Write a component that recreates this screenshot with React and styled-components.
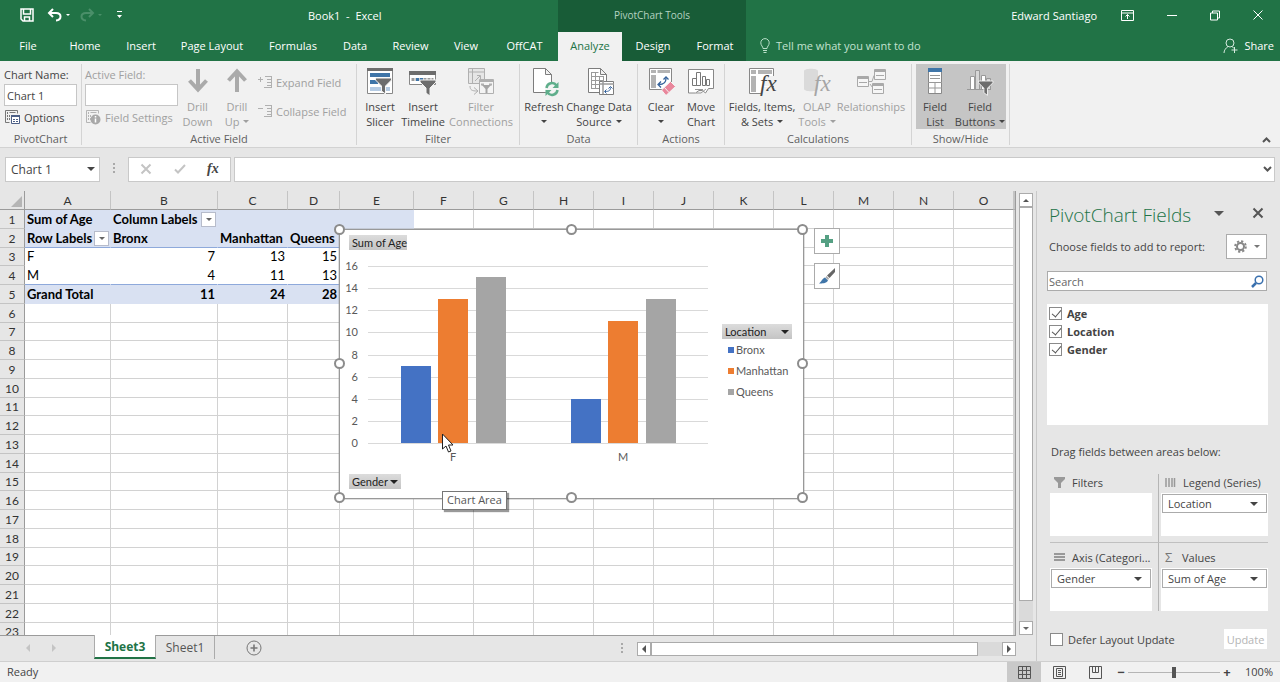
import React from "react";
import styled, { createGlobalStyle, css } from "styled-components";

const UI = `"Open Sans", "Noto Sans", sans-serif`;
const CELL = `Lato, "Open Sans", sans-serif`;

const Global = createGlobalStyle`
  * { box-sizing: border-box; }
  html, body { margin: 0; height: 100%; }
  body { font: 11px/15px ${UI}; color: #444; background: #e6e6e6; }
  button, input { font: inherit; color: inherit; margin: 0; }
  button { border: 0; background: none; padding: 0; }
  svg { display: block; flex: none; overflow: visible; }
`;

const Window = styled.div`
  display: flex;
  flex-direction: column;
  height: 100vh;
  overflow: hidden;
`;

/* ---------- title bar and tabs ---------- */
const Header = styled.header`
  display: grid;
  grid-template-columns: 558px 188px 1fr;
  grid-template-rows: 30px 31px;
  flex: none;
  background: #217346;
  color: #fff;
`;
const TitleLeft = styled.div`
  display: grid;
  grid-template-columns: 130px 1fr;
  align-items: center;
`;
const QuickAccess = styled.div`
  display: flex;
  align-items: center;
  padding-left: 20px;
`;
const QuickButton = styled.button`
  display: flex;
  align-items: center;
  gap: 4px;
  margin-right: ${(p) => p.$after || 0}px;
  color: ${(p) => (p.disabled ? "#4a8f69" : "#fff")};
`;
const BookTitle = styled.h1`
  margin: 0;
  padding-left: 178px;
  font: inherit;
  white-space: pre;
`;
const ContextTitle = styled.div`
  display: flex;
  align-items: center;
  justify-content: center;
  font-size: 10px;
  background: #185c37;
  color: #b4d3c1;
`;
const TitleRight = styled.div`
  display: flex;
  align-items: center;
  justify-content: flex-end;
  padding-right: 17px;
`;
const UserName = styled.span`
  margin-right: 24px;
`;
const WindowButtons = styled.div`
  display: flex;
  gap: 33px;
`;
const TabList = styled.nav`
  display: flex;
  background: ${(p) => (p.$context ? "#185c37" : "transparent")};
`;
const Tab = styled.button`
  width: ${(p) => p.$w}px;
  color: ${(p) => (p.$on ? "#217346" : "#fff")};
  background: ${(p) => (p.$on ? "#f1f1f1" : "transparent")};
  margin-top: ${(p) => (p.$on ? 2 : 0)}px;
  padding-bottom: ${(p) => (p.$on ? 2 : 0)}px;
  white-space: nowrap;
`;
const TabsRight = styled.div`
  display: flex;
  align-items: center;
  justify-content: space-between;
  padding: 0 6px 0 14px;
`;
const IconLabel = styled.button`
  display: flex;
  align-items: center;
  gap: 6px;
  color: ${(p) => p.$color || "inherit"};
  white-space: nowrap;
`;

/* ---------- ribbon ---------- */
const Ribbon = styled.section`
  display: flex;
  flex: none;
  padding: 3px 0 2px;
  background: #f1f1f1;
  border-bottom: 1px solid #d2d2d2;
`;
const Group = styled.div`
  width: ${(p) => p.$w}px;
  flex: none;
  border-right: 1px solid #d4d4d4;
`;
const GroupBody = styled.div`
  display: flex;
  height: 65px;
  margin-bottom: 4px;
  padding-left: ${(p) => p.$pad}px;
`;
const GroupName = styled.div`
  text-align: center;
  line-height: 12px;
  color: #5f5f5f;
`;
const Big = styled.button`
  width: ${(p) => p.$w}px;
  flex: none;
  display: flex;
  flex-direction: column;
  align-items: center;
  padding-top: 3px;
  line-height: 15px;
  white-space: nowrap;
  background: ${(p) => (p.$on ? "#c5c5c5" : "transparent")};
  color: ${(p) => (p.disabled ? "#a0a0a0" : "#444")};
`;
const BigIcon = styled.span`
  height: 32px;
`;
const Line = styled.span`
  display: flex;
  align-items: center;
  gap: 4px;
  height: 15px;
`;
const Caret = styled.span`
  display: block;
  border: ${(p) => p.$s || 3}px solid transparent;
  border-top-color: currentColor;
  border-bottom: 0;
`;
const Stack = styled.div`
  display: flex;
  flex-direction: column;
  width: ${(p) => p.$w}px;
  padding-top: ${(p) => p.$top || 3}px;
  gap: ${(p) => p.$gap || 0}px;
`;
const FieldLabel = styled.label`
  height: 17px;
  line-height: 16px;
  white-space: nowrap;
  color: ${(p) => (p.$off ? "#a0a0a0" : "#444")};
`;
const RibbonInput = styled.input`
  width: ${(p) => p.$w}px;
  height: 22px;
  padding: 0 2px;
  border: 1px solid #c6c6c6;
  background: #fff;
`;
const SmallButton = styled.button`
  display: flex;
  align-items: center;
  gap: 4px;
  height: 22px;
  white-space: nowrap;
  color: ${(p) => (p.disabled ? "#a0a0a0" : "#444")};
`;
const Collapse = styled.button`
  align-self: flex-end;
  margin-left: auto;
  padding: 0 9px 2px 0;
`;

/* ---------- formula bar ---------- */
const FormulaRow = styled.div`
  display: flex;
  flex: none;
  align-items: center;
  height: 43px;
  padding: 0 5px 1px;
`;
const Boxed = styled.div`
  display: flex;
  align-items: center;
  height: 25px;
  background: #fff;
  border: 1px solid #c9c9c9;
  width: ${(p) => (p.$w ? p.$w + "px" : "auto")};
  flex: ${(p) => (p.$w ? "none" : "1")};
  padding-right: ${(p) => p.$pad || 0}px;
  margin-right: ${(p) => p.$after || 0}px;
`;
const EditButton = styled.button`
  display: flex;
  flex: 1;
  align-items: center;
  justify-content: center;
`;
const PlainInput = styled.input`
  flex: 1;
  min-width: 0;
  width: 100%;
  height: 100%;
  border: 0;
  padding: 0 ${(p) => (p.$tight ? 1 : 5)}px;
  font-size: ${(p) => (p.$tight ? 11 : 12)}px;
  background: transparent;
  outline: 0;
  &::placeholder { color: #666; opacity: 1; }
`;
const Dots = styled.span`
  flex: none;
  width: 2px;
  height: 12px;
  margin: 0 ${(p) => p.$after}px 0 ${(p) => p.$before || 0}px;
  background: repeating-linear-gradient(#a9a9a9 0 2px, transparent 2px 4px);
`;

/* ---------- sheet ---------- */
const Main = styled.main`
  display: flex;
  flex: 1;
  min-height: 0;
`;
const SheetSide = styled.div`
  flex: 1;
  min-width: 0;
  display: flex;
  flex-direction: column;
`;
const SheetRow = styled.div`
  flex: 1;
  min-height: 0;
  display: flex;
`;
const GridArea = styled.div`
  position: relative;
  flex: 1;
  min-width: 0;
  overflow: hidden;
  border-right: 1px solid #9b9b9b;
  border-bottom: 1px solid #9b9b9b;
`;
const Sheet = styled.table`
  width: 100%;
  table-layout: fixed;
  border-collapse: separate;
  border-spacing: 0;
  background: #fff;
  color: #000;
  font: 13px/17px ${CELL};
`;
const ColHead = styled.th`
  height: 19px;
  padding: 0;
  font-size: 12px;
  font-weight: 400;
  color: #333;
  background: #e6e6e6;
  border-right: 1px solid ${(p) => (p.$corner ? "#9b9b9b" : "#c4c4c4")};
  border-bottom: 1px solid #9b9b9b;
`;
const Corner = styled.span`
  display: block;
  width: 0;
  height: 0;
  margin: 3px 2px 0 auto;
  border-left: 11px solid transparent;
  border-bottom: 11px solid #b5b5b5;
`;
const RowHead = styled.th`
  padding: 0;
  font-size: 12px;
  font-weight: 400;
  color: #333;
  background: #e6e6e6;
  border-right: 1px solid #9b9b9b;
  border-bottom: 1px solid #c4c4c4;
`;
const Row = styled.tr`
  height: ${(p) => p.$h}px;
`;
const Cell = styled.td`
  padding: 0 2px;
  overflow: hidden;
  white-space: nowrap;
  border-right: 1px solid #d2d2d2;
  border-bottom: 1px solid #d2d2d2;
  text-align: ${(p) => (p.$num ? "right" : "left")};
  font-weight: ${(p) => (p.$bold ? 700 : 400)};
  ${(p) => p.$fill && css`background: #d9e1f2; border-color: #d9e1f2;`}
  ${(p) => p.$plain && css`border-color: #fff;`}
  ${(p) => p.$rule && css`border-bottom-color: #8ea9db;`}
`;
const CellFlex = styled.span`
  display: flex;
  justify-content: space-between;
  align-items: center;
  height: 17px;
`;
const FilterButton = styled.button`
  display: flex;
  align-items: center;
  justify-content: center;
  flex: none;
  width: 15px;
  height: 15px;
  margin-right: -1px;
  background: #fff;
  border: 1px solid #b7bccb;
  color: #666;
`;

/* ---------- chart ---------- */
const Chart = styled.section`
  position: absolute;
  left: 339px;
  top: 38px;
  width: 465px;
  height: 270px;
  display: flex;
  flex-direction: column;
  gap: 2px;
  padding: 5px 0 0 1px;
  background: #fff;
  border: 1px solid #999;
  box-shadow: 0 0 0 1px rgba(150, 150, 150, 0.3);
  color: #595959;
  font: 11px/15px ${CELL};
`;
const ChartBody = styled.div`
  display: flex;
`;
const PivotButton = styled.button`
  display: flex;
  align-items: center;
  justify-content: space-between;
  width: ${(p) => p.$w}px;
  height: 15px;
  padding: 0 3px;
  margin-left: ${(p) => p.$left || 0}px;
  background: linear-gradient(#dcdcdc, #c4c4c4);
  color: #222;
  white-space: nowrap;
`;
const Legend = styled.div`
  padding-top: 72px;
  margin-left: 13px;
`;
const LegendList = styled.ul`
  list-style: none;
  margin: 0;
  padding: 0 0 0 6px;
`;
const LegendItem = styled.li`
  display: flex;
  align-items: center;
  gap: 2px;
  height: 21px;
  &::before {
    content: "";
    width: 6px;
    height: 6px;
    background: ${(p) => p.$c};
  }
`;
const Handle = styled.span`
  position: absolute;
  left: ${(p) => p.$x};
  top: ${(p) => p.$y};
  width: 11px;
  height: 11px;
  margin: -6px 0 0 -6px;
  border: 2px solid #8c8c8c;
  border-radius: 50%;
  background: #fff;
`;
const ChartTools = styled.div`
  position: absolute;
  left: 814px;
  top: 37px;
  display: flex;
  flex-direction: column;
  gap: 9px;
`;
const ToolButton = styled.button`
  display: flex;
  align-items: center;
  justify-content: center;
  width: 26px;
  height: 26px;
  background: #fff;
  border: 1px solid #ababab;
`;
const Tooltip = styled.div`
  position: absolute;
  left: 442px;
  top: 300px;
  height: 19px;
  width: 65px;
  line-height: 16px;
  text-align: center;
  background: #fff;
  border: 1px solid #767676;
  box-shadow: 2px 2px 1px rgba(0, 0, 0, 0.4);
  color: #575757;
`;
const Pointer = styled.svg`
  position: absolute;
  left: 441px;
  top: 242px;
`;

/* ---------- scroll bars and sheet tabs ---------- */
const VScroll = styled.div`
  width: 20px;
  flex: none;
  display: flex;
  flex-direction: column;
  align-items: center;
  padding: 2px 0 1px;
`;
const ScrollButton = styled.button`
  display: flex;
  align-items: center;
  justify-content: center;
  width: 14px;
  height: 14px;
  flex: none;
  background: #fff;
  border: 1px solid #ababab;
  color: #666;
`;
const Thumb = styled.div`
  flex: ${(p) => p.$grow};
  background: #fff;
  border: 1px solid #ababab;
  ${(p) => (p.$h ? css`height: 14px;` : css`width: 14px;`)}
`;
const Track = styled.div`
  flex: ${(p) => p.$grow};
  background: #dadada;
  ${(p) => (p.$h ? css`height: 14px;` : css`width: 14px;`)}
`;
const BottomBar = styled.div`
  display: flex;
  flex: none;
  height: 25px;
`;
const SheetNav = styled.div`
  display: flex;
  align-items: center;
  justify-content: space-between;
  width: 94px;
  padding: 0 38px 2px 26px;
`;
const SheetTab = styled.button`
  position: relative;
  height: ${(p) => (p.$on ? 24 : 23)}px;
  margin-top: ${(p) => (p.$on ? -1 : 0)}px;
  width: ${(p) => (p.$on ? 62 : 59)}px;
  font-size: 12px;
  color: ${(p) => (p.$on ? "#217346" : "#555")};
  font-weight: ${(p) => (p.$on ? 700 : 400)};
  background: ${(p) => (p.$on ? "#fff" : "transparent")};
  border-bottom: ${(p) => (p.$on ? "2px solid #217346" : "0")};
  border-left: ${(p) => (p.$on ? "1px solid #ababab" : "0")};
  border-right: 1px solid #ababab;
`;
const AddSheet = styled.button`
  margin: 0 0 0 31px;
  padding-bottom: 1px;
`;
const HScroll = styled.div`
  display: flex;
  align-items: center;
  width: 415px;
  margin-left: auto;
  padding-right: 20px;
`;

/* ---------- field pane ---------- */
const Pane = styled.aside`
  width: 244px;
  flex: none;
  display: flex;
  flex-direction: column;
  border-left: 1px solid #c9c9c9;
  padding: 10px 12px 0 10px;
`;
const PaneHead = styled.div`
  display: flex;
  align-items: center;
  height: 28px;
  padding: 0 5px 0 2px;
  color: #555;
`;
const PaneTitle = styled.h2`
  margin: 0;
  flex: 1;
  font: 300 19px/28px ${UI};
  color: #217346;
  white-space: nowrap;
`;
const PaneHeadButton = styled.button`
  margin-left: ${(p) => p.$left || 0}px;
  padding-bottom: 4px;
`;
const PaneRow = styled.div`
  display: flex;
  align-items: center;
  justify-content: space-between;
  height: ${(p) => p.$h}px;
  margin-bottom: ${(p) => p.$after || 0}px;
  padding: 0 1px 0 ${(p) => p.$left || 0}px;
`;
const GearButton = styled.button`
  display: flex;
  align-items: center;
  justify-content: space-around;
  width: 41px;
  height: 25px;
  padding: 0 3px;
  background: #fff;
  border: 1px solid #ababab;
  color: #777;
`;
const Search = styled.div`
  display: flex;
  align-items: center;
  height: 20px;
  margin-right: 1px;
  padding-right: 2px;
  background: #fff;
  border: 1px solid #ababab;
`;
const FieldList = styled.div`
  height: 121px;
  margin: 13px 0 18px;
  padding-left: 2px;
  background: #fff;
`;
const Check = styled.label`
  display: flex;
  align-items: center;
  gap: 5px;
  height: 18px;
  font-weight: ${(p) => (p.$bold ? 700 : 400)};
`;
const CheckBox = styled.input`
  appearance: none;
  position: relative;
  width: 13px;
  height: 13px;
  border: 1px solid #8a8a8a;
  background: #fff;
  &:checked::after {
    content: "";
    position: absolute;
    left: 4px;
    top: 0;
    width: 4px;
    height: 8px;
    border: solid #555;
    border-width: 0 1px 1px 0;
    transform: rotate(40deg);
  }
`;
const Areas = styled.div`
  display: grid;
  grid-template-columns: 109px 1fr;
  margin: 15px 0 0 3px;
`;
const Area = styled.div`
  height: ${(p) => (p.$top ? 69 : 68)}px;
  padding-${(p) => (p.$right ? "left" : "right")}: ${(p) => (p.$right ? 2 : 6)}px;
  ${(p) => !p.$right && css`border-right: 1px solid #b5b5b5;`}
  ${(p) => p.$top && css`border-bottom: 1px solid #c0c0c0;`}
`;
const AreaName = styled.div`
  display: flex;
  align-items: center;
  gap: 7px;
  height: ${(p) => (p.$top ? 19 : 25)}px;
  padding: ${(p) => (p.$top ? 0 : 5)}px 0 2px 4px;
  white-space: nowrap;
`;
const Sigma = styled.span`
  width: 10px;
  font-size: 13px;
  color: #777;
`;
const AreaBox = styled.div`
  height: 43px;
  padding: 1px;
  background: #fff;
`;
const AreaField = styled.button`
  display: flex;
  align-items: center;
  justify-content: space-between;
  width: 100%;
  height: 19px;
  padding: 0 8px 0 5px;
  border: 1px solid #ababab;
`;
const DeferRow = styled.div`
  display: flex;
  align-items: center;
  justify-content: space-between;
  margin-top: 18px;
  padding: 0 1px 0 3px;
`;
const UpdateButton = styled.button`
  width: 43px;
  height: 20px;
  background: #fff;
  color: #b5b5b5;
`;

/* ---------- status bar ---------- */
const Status = styled.footer`
  display: flex;
  align-items: center;
  flex: none;
  height: 21px;
  padding: 0 7px;
  background: #f1f1f1;
  border-top: 1px solid #cfcfcf;
`;
const StatusText = styled.span`
  flex: 1;
  padding-bottom: 2px;
`;
const Views = styled.div`
  display: flex;
  margin-right: 1px;
`;
const View = styled.button`
  display: flex;
  align-items: center;
  justify-content: center;
  width: ${(p) => (p.$on ? 34 : 36)}px;
  height: 20px;
  background: ${(p) => (p.$on ? "#c9c9c9" : "transparent")};
`;
const ZoomSign = styled.button`
  width: 14px;
  font-weight: 700;
  font-size: 13px;
`;
const ZoomRange = styled.input`
  appearance: none;
  width: 92px;
  height: 11px;
  margin: 0;
  background: linear-gradient(#b5b5b5, #b5b5b5) center / 100% 1px no-repeat;
  &::-webkit-slider-thumb {
    appearance: none;
    width: 4px;
    height: 11px;
    background: #555;
  }
`;
const ZoomValue = styled.span`
  width: 39px;
  padding-bottom: 2px;
  text-align: right;
`;

/* ---------- icons ---------- */
const Svg = ({ w = 28, h = 28, x = 0, children, ...rest }) => (
  <svg width={w} height={h} viewBox={`${x} 0 ${w} ${h}`} fill="none" stroke="#666" aria-hidden="true" {...rest}>
    {children}
  </svg>
);
const SaveIcon = () => (
  <Svg w={14} h={14} stroke="#fff" strokeWidth="1.5">
    <path d="M1 1h12v12H3l-2-2zM3.500 1v5h7V1M4.500 13V9h5v4" />
  </Svg>
);
const UndoIcon = ({ flip }) => (
  <Svg w={14} h={14} stroke="currentColor" strokeWidth="2">
    <path d={flip ? "M9 1l4 4-4 4M12 5H6C0 5 0 12 6 12.500" : "M5 1L1 5l4 4M2 5h6c6 0 6 7 0 7.500"} />
  </Svg>
);
const CustomizeIcon = () => (
  <Svg w={7} h={8} stroke="none" fill="#fff">
    <path d="M1 0h5v1H1zM1 4h5L3.500 7z" />
  </Svg>
);
const DisplayIcon = () => (
  <Svg w={13} h={11} stroke="#fff">
    <path d="M.5.5h12v10H.5zM.5 3h12M6.500 9V4.500M4.500 6.500l2-2 2 2" />
  </Svg>
);
const MinIcon = () => <Svg w={10} h={11} stroke="#fff"><path d="M0 5.500h10" /></Svg>;
const RestoreIcon = () => (
  <Svg w={10} h={11} stroke="#fff"><path d="M.5 3h7v7h-7zM2.500 3V1h7v7h-2" /></Svg>
);
const CloseIcon = ({ c = "#fff", w = 1 }) => (
  <Svg w={10} h={10} stroke={c} strokeWidth={w}><path d="M.5.5l9 9M9.500.5l-9 9" /></Svg>
);
const BulbIcon = () => (
  <Svg w={10} h={15} stroke="#b9e0c9">
    <path d="M3 10.500C3 8.500.8 7.500.8 4.800a4.200 4.200 0 018.400 0C9.200 7.500 7 8.500 7 10.500zM3 12.500h4M3.500 14.500h3" />
  </Svg>
);
const ShareIcon = () => (
  <Svg w={15} h={16} stroke="#d6eadf">
    <circle cx="7" cy="5" r="4" />
    <path d="M1 15c0-3 2-5 4-6.500M9 8.500l2 2M11.500 9v6M8.500 12h6" />
  </Svg>
);
const OptionsIcon = ({ off }) => (
  <Svg w={16} h={16} stroke={off ? "#b5b5b5" : "#777"}>
    <path d="M1.500 13.500v-12h12v3M1.500 13.500h4M5.500 3.500h6" />
    <path d="M3.500 3v9M5.500 6v6" strokeDasharray="2 1" />
    {off ? (
      <>
        <circle cx="10.500" cy="10.500" r="5" fill="#a8a8a8" stroke="none" />
        <path d="M10.500 7v1.500M10.500 9.500v4" stroke="#fff" strokeWidth="1.500" />
      </>
    ) : (
      <>
        <path d="M7.500 6.500h8v8h-8z" fill="#fff" stroke="#4c5f86" />
        <path d="M7 7h9" stroke="#4c5f86" strokeWidth="2" />
        <path d="M9 10.500h2M12 10.500h2M9 12.500h2M12 12.500h2" stroke="#4c5f86" />
      </>
    )}
  </Svg>
);
const DrillIcon = ({ up }) => (
  <Svg w={22} h={28} stroke="#aaa" strokeWidth="4">
    <path d={up ? "M11 25V5M2.500 13.500L11 4.500l8.500 9" : "M11 2v20M2.500 13.500l8.500 9 8.500-9"} />
  </Svg>
);
const OutlineIcon = ({ minus }) => (
  <Svg w={14} h={14} stroke="#b0b0b0">
    <path d={minus ? "M0 4.500h5" : "M0 4.500h5M2.500 2v5"} />
    <path d="M7 1.500h6M9 4.500h4M9 7.500h4M6 12.500h7M9 10.500h4M13.500 1v12" />
  </Svg>
);
const Funnel = ({ x, y, s = 1, c = "#6d6d6d" }) => (
  <path transform={`translate(${x} ${y}) scale(${s})`} d="M0 0h16v2L10 8v8l-4-3V8L0 2z" fill={c} stroke="#f4f4f4" />
);
const SlicerIcon = () => (
  <Svg>
    <path d="M1.500 2v24.500h25V2" fill="#fff" stroke="#888" />
    <path d="M1 1h26v3H1z" fill="#6d6d6d" stroke="none" />
    <path d="M4 6h20v4H4zM4 13h8v4H4z" fill="#3f75a8" stroke="none" />
    <path d="M4 20h20v4H4z" fill="#b5cbe3" stroke="none" />
    <Funnel x={9.500} y={11} />
  </Svg>
);
const TimelineIcon = () => (
  <Svg>
    <path d="M.5 6v11.500h26V6" fill="#fff" stroke="#888" />
    <path d="M0 4h27v4H0z" fill="#6d6d6d" stroke="none" />
    <path d="M2.500 12.500h22" stroke="#9a9a9a" strokeWidth="3" strokeDasharray="3 1" />
    <path d="M7 12.500h8" stroke="#3f75a8" strokeWidth="3" strokeDasharray="3 1" />
    <Funnel x={11} y={13} />
  </Svg>
);
const FilterLinkIcon = () => (
  <Svg stroke="#b0b0b0">
    <path d="M1.500 1.500h16v15h-16zM1.500 5h16M5.500 1.500v15M8 14l5-5M10 8.500h3.500V12" fill="#e6e6e6" />
    <path d="M3 19c0 4 2 5 7 5M7 20.500l4 3.500-4 3.500" />
    <path d="M12.500 12.500h14v14h-14z" fill="#f4f4f4" />
    <path d="M12 14h15M14 17.500h3M22 17.500h3" strokeWidth="2" />
    <path d="M15 18h9l-3.500 4v4h-2v-4z" fill="#a5a5a5" stroke="none" />
  </Svg>
);
const RefreshIcon = () => (
  <Svg w={32} x={-4}>
    <path d="M1.500 1.500h12l6 6v18h-18zM13.500 1.500v6h6" fill="#fff" stroke="#7d7d7d" />
    <circle cx="20" cy="22" r="7" fill="#f4f4f4" stroke="none" />
    <path d="M14.500 21a5.500 5.500 0 0110-2.500M25.500 23a5.500 5.500 0 01-10 2.500" stroke="#5fae8b" strokeWidth="2.500" />
    <path d="M26.500 15v6h-6zM13.500 29v-6h6z" fill="#5fae8b" stroke="none" />
  </Svg>
);
const SourceIcon = () => (
  <Svg w={32} x={-4}>
    <path d="M1.500 1.500h12l6 6v18h-18zM13.500 1.500v6h6" fill="#fff" stroke="#7d7d7d" />
    <path d="M4.500 5.500h7M4.500 9.500h12M4.500 13.500h12M4.500 17.500h12M4.500 21.500h12M4.500 5v17M8.500 5v17M12.500 9v13M16.500 9v13" stroke="#9a9a9a" />
    <path d="M12.500 14.500h14v13h-14z" fill="#fff" stroke="#7d7d7d" />
    <path d="M12 17h15M16 14v13" stroke="#9a9a9a" strokeWidth="1.500" />
    <path d="M18 24.500c4 0 5.500-1 5.500-4M21.500 21.500l2-2 2 2M19.500 22.500l-2 2 2 2" stroke="#35629b" />
  </Svg>
);
const ClearIcon = () => (
  <Svg w={32} x={-4}>
    <path d="M.5 1.500h22v21h-22z" fill="#fff" stroke="#888" />
    <path d="M2 3h5v3H2zM8.500 3H21v3H8.500zM2 8h5v13H2z" fill="#b3b3b3" stroke="none" />
    <path d="M10 17.500c5 0 7-2 7-6M14.500 12.500l2.500-2.500 2.500 2.500M12 14.500l-3 3 3 3" stroke="#35629b" strokeWidth="1.300" />
    <path d="M12.500 23l9-8.500 5 5L17.500 28h-1z" fill="#e9879c" stroke="#f4f4f4" />
    <path d="M15.500 20.500l4.500 5" stroke="#f4f4f4" />
  </Svg>
);
const MoveIcon = () => (
  <Svg>
    <path d="M1.500 2.500h25v19h-5l-3 4.500-3-2.500H12l-3.500 2.500H1.500z" fill="#fff" stroke="#888" />
    <path d="M5.500 11.500h4v7h-4zM9.500 5.500h4v13h-4zM15.500 9.500h3v9h-3zM19.500 12.500h3v6h-3z" stroke="#777" />
    <path d="M8 22.500h8M9 26h5l5-4" stroke="#999" />
  </Svg>
);
const FxGlyph = ({ x, y, size, color = "#444", bold }) => (
  <text x={x} y={y} fill={color} stroke="none" fontFamily="Liberation Serif, serif" fontStyle="italic" fontWeight={bold ? 700 : 400} fontSize={size}>fx</text>
);
const FieldsIcon = () => (
  <Svg w={32}>
    <path d="M3.500 1.500h24v25h-24z" fill="#fff" stroke="#888" />
    <path d="M5 3h5v4H5zM12 3h14v4H12zM5 9h5v16H5z" fill="#b3b3b3" stroke="none" />
    <path d="M18 9h11v10H18zM15 20h13v7H15z" fill="#f1f1f1" stroke="none" />
    <FxGlyph x={14} y={24} size={23} />
  </Svg>
);
const OlapIcon = () => (
  <Svg>
    <path d="M1 4c0-3 14-3 14 0v18c0 3-14 3-14 0z" fill="#dadada" stroke="none" />
    <FxGlyph x={11} y={24} size={23} color="#a5a5a5" />
  </Svg>
);
const RelationIcon = () => (
  <Svg w={30} stroke="#a9a9a9">
    <path d="M1.500 9.500h11v10h-11zM18.500 2.500h11v10h-11zM16.500 16.500h11v10h-11zM13 14.500h3M16 14.500l2-6M14 17l2.500 3.500" fill="#f6f6f6" />
    <path d="M1 11h12M18 4h12M16 18h12" strokeWidth="2" />
    <path d="M3 15.500h8M20 8.500h8M18 22.500h8" />
  </Svg>
);
const ListIcon = () => (
  <Svg w={16}>
    <path d="M1.500 2.500h13v24h-13z" fill="#fff" stroke="#888" />
    <path d="M1 1h14v4H1z" fill="#3f75a8" stroke="none" />
    <path d="M3 8.500h10M3 11.500h10" stroke="#999" />
    <path d="M1 15.500h14M1 21h14M8 15v11" stroke="#999" />
  </Svg>
);
const ButtonsIcon = () => (
  <Svg>
    <path d="M4.500 9.500h4v13h-4zM15.500 8.500h4v14h-4z" fill="#fff" stroke="#999" />
    <path d="M9.500 3.500h4v19h-4zM20.500 11.500h4v11h-4z" fill="#d6d6d6" stroke="#999" />
    <path d="M1 22.500h24" stroke="#999" />
    <Funnel x={12.500} y={14} s={0.9} />
  </Svg>
);
const Chevron = ({ up }) => (
  <Svg w={9} h={6} stroke="#555" strokeWidth="2"><path d={up ? "M1 5l3.500-3.500L8 5" : "M1 1l3.500 3.500L8 1"} /></Svg>
);
const CheckIcon = () => (
  <Svg w={12} h={10} stroke="#c4c4c4" strokeWidth="2"><path d="M1 5.500L4 8.500 11 1" /></Svg>
);
const PlusIcon = () => (
  <Svg w={14} h={14} stroke="#55a083" strokeWidth="4"><path d="M7 1v12M1 7h12" /></Svg>
);
const BrushIcon = () => (
  <Svg w={18} h={18} stroke="none">
    <path d="M17 1v4l-5.500 6-2.500-2.500z" fill="#666" />
    <path d="M8.500 9L11 11.500 10 13 7.500 10.500z" fill="#aaa" />
    <path d="M7 10.500L10 13.500C8.500 16.500 4 16.500 1 16.500 3.500 15 4 11.500 7 10.500z" fill="#3f75a8" />
  </Svg>
);
const GearIcon = () => (
  <Svg w={13} h={13} stroke="#888">
    <circle cx="6.500" cy="6.500" r="3.500" strokeWidth="2" />
    <circle cx="6.500" cy="6.500" r="5.300" strokeWidth="2" strokeDasharray="2.200 1.960" />
  </Svg>
);
const SearchIcon = () => (
  <Svg w={13} h={13} stroke="#3a70ae">
    <circle cx="8" cy="5" r="3.800" strokeWidth="1.500" /><path d="M5 8l-4 4" strokeWidth="2.500" />
  </Svg>
);
const SideArrow = ({ right, c = "#555" }) => (
  <Svg w={4} h={8} stroke="none" fill={c}><path d={right ? "M0 0l4 4-4 4z" : "M4 0L0 4l4 4z"} /></Svg>
);
const UpArrow = () => <Svg w={6} h={3} stroke="none" fill="#555"><path d="M3 0l3 3H0z" /></Svg>;
const AddIcon = () => (
  <Svg w={16} h={16} stroke="#777"><circle cx="8" cy="8" r="7" /><path d="M8 4.500v7M4.500 8h7" strokeWidth="1.600" /></Svg>
);
const AreaFilterIcon = () => (
  <Svg w={11} h={11} stroke="none" fill="#999"><path d="M0 0h11v2L7 6v5H4V6L0 2z" /></Svg>
);
const AreaColsIcon = () => (
  <Svg w={11} h={11} stroke="#999"><path d="M1 1v9M4 1v9M7 1v9M9.500 1v9" strokeWidth="1.500" /></Svg>
);
const AreaRowsIcon = () => (
  <Svg w={11} h={11} stroke="#999"><path d="M0 2h11M0 5h11M0 8h11" strokeWidth="2" /></Svg>
);
const NormalIcon = () => (
  <Svg w={13} h={13} stroke="#555"><path d="M.5.5h12v12H.5zM.5 4.500h12M.5 8.500h12M4.500.5v12M8.500.5v12" /></Svg>
);
const PageIcon = () => (
  <Svg w={13} h={13} stroke="#555"><path d="M.5.5h12v12H.5zM3.500 2.500h6v8h-6zM5 4.500h3M5 6.500h3M5 8.500h3" /></Svg>
);
const BreakIcon = () => (
  <Svg w={13} h={13} stroke="#555"><path d="M.5.5h12v12H.5zM3.500.5v6h6v-6M6.500.5v6" /></Svg>
);

/* ---------- data ---------- */
const MAIN_TABS = [["File", 56], ["Home", 58], ["Insert", 54], ["Page Layout", 88], ["Formulas", 74], ["Data", 50], ["Review", 61], ["View", 50], ["OffCAT", 67]];
const COLS = [["A", 86], ["B", 107], ["C", 70], ["D", 52], ["E", 74], ...[..."FGHIJKLMNO"].map((l) => [l, 60])];
const ROW_HEIGHTS = [19, 19, 18, 19];
const SERIES = [
  { name: "Bronx", color: "#4472c4", values: [7, 4] },
  { name: "Manhattan", color: "#ed7d31", values: [13, 11] },
  { name: "Queens", color: "#a5a5a5", values: [15, 13] },
];
const PIVOT = {
  3: ["F", 7, 13, 15],
  4: ["M", 4, 11, 13],
  5: ["Grand Total", 11, 24, 28],
};

function FilterHeading({ text, label }) {
  return (
    <CellFlex>
      {text}
      <FilterButton aria-label={label}><Caret /></FilterButton>
    </CellFlex>
  );
}

function SheetCell({ row, col }) {
  if (row === 1 && col < 5) {
    return (
      <Cell $bold $fill>
        {col === 0 && "Sum of Age"}
        {col === 1 && <FilterHeading text="Column Labels" label="Filter columns" />}
      </Cell>
    );
  }
  if (row === 2 && col < 5) {
    return (
      <Cell $bold $fill $rule>
        {col === 0 ? <FilterHeading text="Row Labels" label="Filter rows" /> : ["", "Bronx", "Manhattan", "Queens", ""][col]}
      </Cell>
    );
  }
  if (PIVOT[row] && col < 4) {
    const total = row === 5;
    return (
      <Cell $bold={total} $fill={total} $plain={!total} $rule={row === 4} $num={col > 0}>
        {PIVOT[row][col]}
      </Cell>
    );
  }
  return <Cell />;
}

function PivotSheet() {
  return (
    <Sheet>
      <colgroup>
        <col width="25" />
        {COLS.map(([l, w]) => <col key={l} width={w} />)}
        <col />
      </colgroup>
      <thead>
        <tr>
          <ColHead $corner><Corner /></ColHead>
          {COLS.map(([l]) => <ColHead key={l} scope="col">{l}</ColHead>)}
          <ColHead />
        </tr>
      </thead>
      <tbody>
        {Array.from({ length: 23 }, (_, i) => (
          <Row key={i} $h={ROW_HEIGHTS[i % 4]}>
            <RowHead scope="row">{i + 1}</RowHead>
            {COLS.map(([l], c) => <SheetCell key={l} row={i + 1} col={c} />)}
            <Cell />
          </Row>
        ))}
      </tbody>
    </Sheet>
  );
}

function Plot() {
  const y = (v) => Math.round(191 - v * 11.0625);
  return (
    <svg width="368" height="220" viewBox="0 0 368 220" role="img" aria-label="Sum of Age by Gender and Location">
      {[0, 2, 4, 6, 8, 10, 12, 14, 16].map((v) => (
        <g key={v}>
          <path d={`M27 ${y(v) + 0.5}H367`} stroke="#d9d9d9" />
          <text x="17" y={y(v) + 4} textAnchor="end" fill="#595959">{v}</text>
        </g>
      ))}
      {["F", "M"].map((g, gi) => (
        <g key={g}>
          {SERIES.map((s, si) => (
            <rect key={s.name} x={[60, 97, 135][si] + gi * 170} y={y(s.values[gi])} width="30" height={191 - y(s.values[gi])} fill={s.color} />
          ))}
          <text x={112 + gi * 170} y="209" textAnchor="middle" fill="#595959">{g}</text>
        </g>
      ))}
    </svg>
  );
}

function PivotChart() {
  return (
    <>
      <Chart aria-label="Chart 1">
        <PivotButton $w={58} $left={8}>Sum of Age</PivotButton>
        <ChartBody>
          <Plot />
          <Legend>
            <PivotButton $w={70}>Location <Caret $s={4} /></PivotButton>
            <LegendList>
              {SERIES.map((s) => <LegendItem key={s.name} $c={s.color}>{s.name}</LegendItem>)}
            </LegendList>
          </Legend>
        </ChartBody>
        <PivotButton $w={52} $left={8}>Gender <Caret $s={4} /></PivotButton>
        {["0%", "50%", "100%"].flatMap((x) => ["0%", "50%", "100%"].map((yy) => (
          x === "50%" && yy === "50%" ? null : <Handle key={x + yy} $x={x} $y={yy} />
        )))}
      </Chart>
      <ChartTools>
        <ToolButton aria-label="Chart elements"><PlusIcon /></ToolButton>
        <ToolButton aria-label="Chart styles"><BrushIcon /></ToolButton>
      </ChartTools>
      <Tooltip role="tooltip">Chart Area</Tooltip>
      <Pointer width="13" height="20" viewBox="0 0 13 20" aria-hidden="true">
        <path d="M1.500 1v15l3.500-3 2.500 6 2.500-1-2.500-6h4.500z" fill="#fff" stroke="#222" />
      </Pointer>
    </>
  );
}

function BigButton({ w, icon, lines, caret, on, disabled }) {
  return (
    <Big $w={w} $on={on} disabled={disabled}>
      <BigIcon>{icon}</BigIcon>
      <Line>{lines[0]}</Line>
      <Line>{lines[1]}{caret && <Caret />}</Line>
    </Big>
  );
}

function RibbonGroup({ w, pad, name, children }) {
  return (
    <Group $w={w}>
      <GroupBody $pad={pad}>{children}</GroupBody>
      <GroupName>{name}</GroupName>
    </Group>
  );
}

function DropArea({ top, right, icon, name, field }) {
  return (
    <Area $top={top} $right={right}>
      <AreaName $top={top}>{icon}{name}</AreaName>
      <AreaBox>{field && <AreaField>{field} <Caret $s={4} /></AreaField>}</AreaBox>
    </Area>
  );
}

export default function App() {
  return (
    <Window>
      <Global />
      <Header>
        <TitleLeft>
          <QuickAccess>
            <QuickButton $after={14} aria-label="Save"><SaveIcon /></QuickButton>
            <QuickButton $after={10} aria-label="Undo"><UndoIcon /><Caret $s={2} /></QuickButton>
            <QuickButton $after={14} disabled aria-label="Redo"><UndoIcon flip /><Caret $s={2} /></QuickButton>
            <QuickButton aria-label="Customize toolbar"><CustomizeIcon /></QuickButton>
          </QuickAccess>
          <BookTitle>Book1  -  Excel</BookTitle>
        </TitleLeft>
        <ContextTitle>PivotChart Tools</ContextTitle>
        <TitleRight>
          <UserName>Edward Santiago</UserName>
          <WindowButtons>
            <button aria-label="Ribbon display"><DisplayIcon /></button>
            <button aria-label="Minimize"><MinIcon /></button>
            <button aria-label="Restore"><RestoreIcon /></button>
            <button aria-label="Close"><CloseIcon /></button>
          </WindowButtons>
        </TitleRight>
        <TabList>
          {MAIN_TABS.map(([t, w]) => <Tab key={t} $w={w}>{t}</Tab>)}
        </TabList>
        <TabList $context>
          <Tab $w={64} $on>Analyze</Tab>
          <Tab $w={62}>Design</Tab>
          <Tab $w={62}>Format</Tab>
        </TabList>
        <TabsRight>
          <IconLabel $color="#c3e2d0"><BulbIcon />Tell me what you want to do</IconLabel>
          <IconLabel><ShareIcon />Share</IconLabel>
        </TabsRight>
      </Header>

      <Ribbon>
        <RibbonGroup w={82} pad={4} name="PivotChart">
          <Stack $w={74}>
            <FieldLabel htmlFor="chart-name">Chart Name:</FieldLabel>
            <RibbonInput id="chart-name" $w={73} defaultValue="Chart 1" />
            <SmallButton><OptionsIcon />Options</SmallButton>
          </Stack>
        </RibbonGroup>
        <RibbonGroup w={275} pad={3} name="Active Field">
          <Stack $w={94}>
            <FieldLabel htmlFor="active-field" $off>Active Field:</FieldLabel>
            <RibbonInput id="active-field" $w={93} disabled />
            <SmallButton disabled><OptionsIcon off />Field Settings</SmallButton>
          </Stack>
          <BigButton w={37} icon={<DrillIcon />} lines={["Drill", "Down"]} disabled />
          <BigButton w={42} icon={<DrillIcon up />} lines={["Drill", "Up"]} caret disabled />
          <Stack $w={88} $top={7} $gap={7}>
            <SmallButton disabled><OutlineIcon />Expand Field</SmallButton>
            <SmallButton disabled><OutlineIcon minus />Collapse Field</SmallButton>
          </Stack>
        </RibbonGroup>
        <RibbonGroup w={163} pad={4} name="Filter">
          <BigButton w={38} icon={<SlicerIcon />} lines={["Insert", "Slicer"]} />
          <BigButton w={48} icon={<TimelineIcon />} lines={["Insert", "Timeline"]} />
          <BigButton w={68} icon={<FilterLinkIcon />} lines={["Filter", "Connections"]} disabled />
        </RibbonGroup>
        <RibbonGroup w={118} pad={3} name="Data">
          <BigButton w={42} icon={<RefreshIcon />} lines={["Refresh", ""]} caret />
          <BigButton w={68} icon={<SourceIcon />} lines={["Change Data", "Source"]} caret />
        </RibbonGroup>
        <RibbonGroup w={87} pad={3} name="Actions">
          <BigButton w={40} icon={<ClearIcon />} lines={["Clear", ""]} caret />
          <BigButton w={40} icon={<MoveIcon />} lines={["Move", "Chart"]} />
        </RibbonGroup>
        <RibbonGroup w={187} pad={3} name="Calculations">
          <BigButton w={68} icon={<FieldsIcon />} lines={["Fields, Items,", "& Sets"]} caret />
          <BigButton w={42} icon={<OlapIcon />} lines={["OLAP", "Tools"]} caret disabled />
          <BigButton w={66} icon={<RelationIcon />} lines={["Relationships", ""]} disabled />
        </RibbonGroup>
        <RibbonGroup w={98} pad={4} name="Show/Hide">
          <BigButton w={38} icon={<ListIcon />} lines={["Field", "List"]} on />
          <BigButton w={52} icon={<ButtonsIcon />} lines={["Field", "Buttons"]} caret on />
        </RibbonGroup>
        <Collapse aria-label="Collapse ribbon"><Chevron up /></Collapse>
      </Ribbon>

      <FormulaRow>
        <Boxed $w={95} $pad={4}>
          <PlainInput aria-label="Name box" defaultValue="Chart 1" />
          <button aria-label="Names"><Caret $s={4} /></button>
        </Boxed>
        <Dots $before={13} $after={13} />
        <Boxed $w={103} $after={3}>
          <EditButton aria-label="Cancel"><CloseIcon c="#c4c4c4" w={2} /></EditButton>
          <EditButton aria-label="Enter"><CheckIcon /></EditButton>
          <EditButton aria-label="Insert function">
            <Svg w={12} h={14}><FxGlyph x={0} y={11} size={14} bold /></Svg>
          </EditButton>
        </Boxed>
        <Boxed $pad={2}>
          <PlainInput aria-label="Formula bar" />
          <button aria-label="Expand formula bar"><Chevron /></button>
        </Boxed>
      </FormulaRow>

      <Main>
        <SheetSide>
          <SheetRow>
            <GridArea>
              <PivotSheet />
              <PivotChart />
            </GridArea>
            <VScroll>
              <ScrollButton aria-label="Scroll up"><UpArrow /></ScrollButton>
              <Thumb $grow={394} />
              <Track $grow={20} />
              <ScrollButton aria-label="Scroll down"><Caret /></ScrollButton>
            </VScroll>
          </SheetRow>
          <BottomBar>
            <SheetNav>
              <SideArrow c="#c4c4c4" />
              <SideArrow right c="#c4c4c4" />
            </SheetNav>
            <SheetTab $on>Sheet3</SheetTab>
            <SheetTab>Sheet1</SheetTab>
            <AddSheet aria-label="New sheet"><AddIcon /></AddSheet>
            <HScroll>
              <Dots $after={14} />
              <ScrollButton aria-label="Scroll left"><SideArrow /></ScrollButton>
              <Thumb $h $grow={327} />
              <Track $h $grow={24} />
              <ScrollButton aria-label="Scroll right"><SideArrow right /></ScrollButton>
            </HScroll>
          </BottomBar>
        </SheetSide>

        <Pane>
          <PaneHead>
            <PaneTitle>PivotChart Fields</PaneTitle>
            <PaneHeadButton aria-label="Pane options"><Caret $s={5} /></PaneHeadButton>
            <PaneHeadButton $left={29} aria-label="Close pane"><CloseIcon c="#555" w={2} /></PaneHeadButton>
          </PaneHead>
          <PaneRow $h={34} $after={8} $left={2}>
            Choose fields to add to report:
            <GearButton aria-label="Tools"><GearIcon /><Caret /></GearButton>
          </PaneRow>
          <Search>
            <PlainInput aria-label="Search" placeholder="Search" $tight />
            <SearchIcon />
          </Search>
          <FieldList>
            {["Age", "Location", "Gender"].map((f) => (
              <Check key={f} $bold><CheckBox type="checkbox" defaultChecked />{f}</Check>
            ))}
          </FieldList>
          <PaneRow $h={16} $left={4}>Drag fields between areas below:</PaneRow>
          <Areas>
            <DropArea top icon={<AreaFilterIcon />} name="Filters" />
            <DropArea top right icon={<AreaColsIcon />} name="Legend (Series)" field="Location" />
            <DropArea icon={<AreaRowsIcon />} name="Axis (Categori..." field="Gender" />
            <DropArea right icon={<Sigma>Σ</Sigma>} name="Values" field="Sum of Age" />
          </Areas>
          <DeferRow>
            <Check><CheckBox type="checkbox" />Defer Layout Update</Check>
            <UpdateButton disabled>Update</UpdateButton>
          </DeferRow>
        </Pane>
      </Main>

      <Status>
        <StatusText>Ready</StatusText>
        <Views>
          <View $on aria-label="Normal view"><NormalIcon /></View>
          <View aria-label="Page layout view"><PageIcon /></View>
          <View aria-label="Page break view"><BreakIcon /></View>
        </Views>
        <ZoomSign aria-label="Zoom out">−</ZoomSign>
        <ZoomRange type="range" aria-label="Zoom" min="0" max="200" defaultValue="100" />
        <ZoomSign aria-label="Zoom in">+</ZoomSign>
        <ZoomValue>100%</ZoomValue>
      </Status>
    </Window>
  );
}
